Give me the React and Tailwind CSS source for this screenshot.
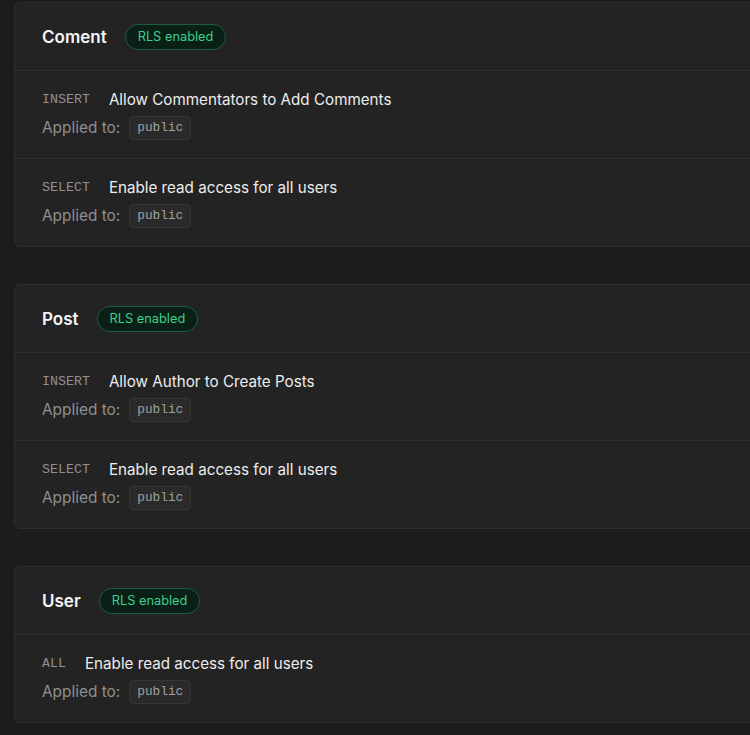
import React from "react";

const tables = [
  {
    name: "Coment",
    policies: [
      { cmd: "INSERT", title: "Allow Commentators to Add Comments" },
      { cmd: "SELECT", title: "Enable read access for all users" },
    ],
  },
  {
    name: "Post",
    policies: [
      { cmd: "INSERT", title: "Allow Author to Create Posts" },
      { cmd: "SELECT", title: "Enable read access for all users" },
    ],
  },
  {
    name: "User",
    policies: [{ cmd: "ALL", title: "Enable read access for all users" }],
  },
];

const mono = "font-['Liberation_Mono','DejaVu_Sans_Mono',monospace]";

const PolicyRow = ({ policy }) => (
  <div className="border-t border-[#2e2e2e] px-[27px] pt-[19px] pb-[18px]">
    <div className="flex items-center h-[20px] gap-[19px]">
      <span className={`${mono} text-[13.3px] text-[#8f8f8f] uppercase`}>
        {policy.cmd}
      </span>
      <span className="text-[15.2px] text-[#ededed]">{policy.title}</span>
    </div>
    <div className="flex items-center h-[24px] mt-[6px] gap-[9px]">
      <span className="text-[15.4px] text-[#8f8f8f]">Applied to:</span>
      <span
        className={`${mono} text-[12.8px] text-[#a0a0a0] bg-[#2a2a2a] border border-[#363636] rounded px-[7px] h-[24px] flex items-center`}
      >
        public
      </span>
    </div>
  </div>
);

const TableCard = ({ table }) => (
  <div className="w-[780px] bg-[#232323] border border-[#2e2e2e] rounded-md">
    <div className="h-[67px] flex items-center px-[27px] gap-[18px]">
      <h3 className="text-[17px] font-semibold text-[#f5f5f5] pt-[2px]">
        {table.name}
      </h3>
      <span className="h-[26px] px-[12px] flex items-center rounded-full border border-[#1b5e3f] bg-[#0a1f16] text-[12.8px] text-[#3ecf8e]">
        RLS enabled
      </span>
    </div>
    {table.policies.map((p, i) => (
      <PolicyRow key={i} policy={p} />
    ))}
  </div>
);

export default function App() {
  return (
    <div className="w-[750px] h-[735px] overflow-hidden bg-[#1c1c1c] font-['Inter','Noto_Sans',sans-serif]">
      <div className="pl-[14px] pt-[2px] flex flex-col gap-[37px]">
        {tables.map((t) => (
          <TableCard key={t.name} table={t} />
        ))}
      </div>
    </div>
  );
}
